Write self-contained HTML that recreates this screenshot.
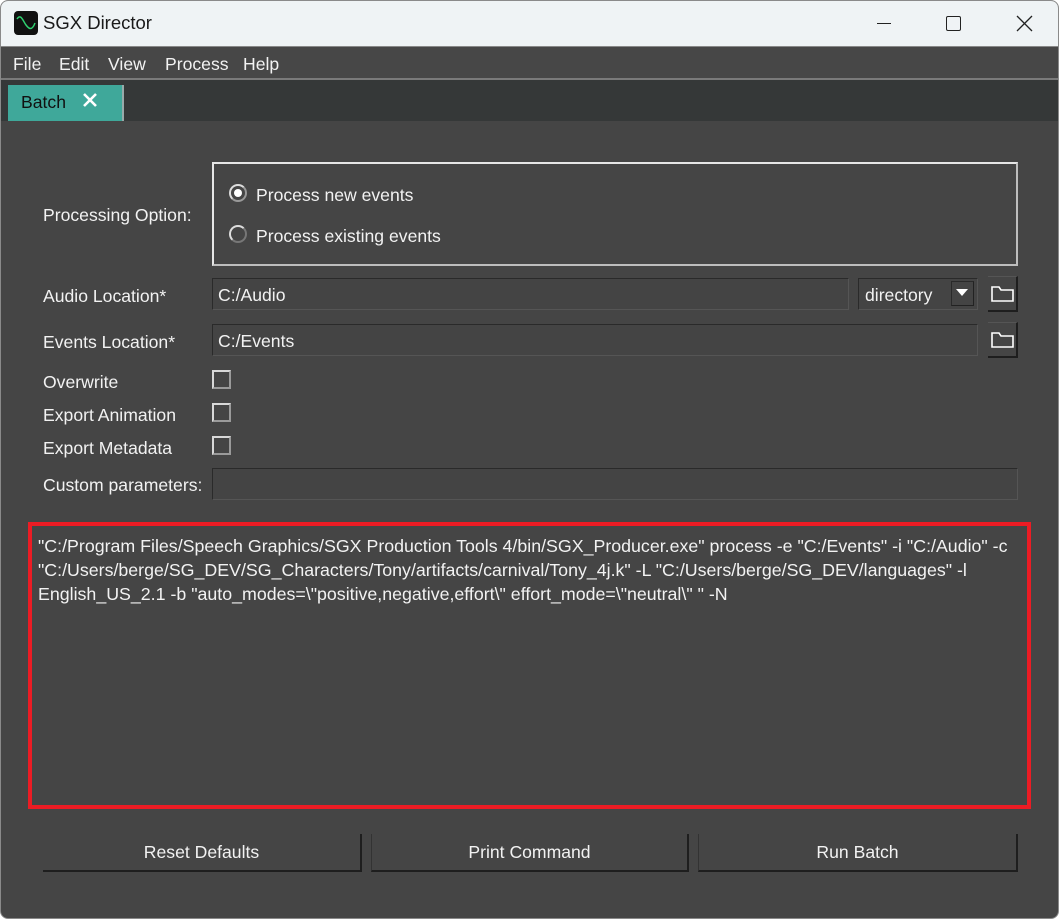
<!DOCTYPE html>
<html><head><meta charset="utf-8"><style>
*{margin:0;padding:0;box-sizing:border-box}
body{width:1059px;height:919px;background:#fff;font-family:"Liberation Sans",sans-serif;overflow:hidden;position:relative}
.a{position:absolute}
.win{left:0;top:0;width:1059px;height:919px;border:1px solid #8a8a8a;border-radius:8px;overflow:hidden;background:#454545}
.t{color:#f2f2f2;font-size:17.6px;white-space:nowrap}
.inp{background:#444;border:1px solid #2a2a2a;border-right-color:#555;border-bottom-color:#555}
.cb{width:19px;height:19px;border:2px solid #d8d8d8;border-right-color:#9a9a9a;border-bottom-color:#9a9a9a;background:#454545}
.btn{border-right:2px solid #1e1e1e;border-bottom:2px solid #1e1e1e;color:#f2f2f2;font-size:17.6px;text-align:center;line-height:36px}
.fold{width:30px;height:36px;border-right:2px solid #1e1e1e;border-bottom:2px solid #1e1e1e;border-top:1px solid #555}
</style></head><body>
<div class="a win">
 <div class="a" style="left:0;top:0;width:1059px;height:45px;background:#eff3f5"></div>
 <div class="a" style="left:13px;top:10px;width:24px;height:24px;background:#111;border-radius:4px">
  <svg width="24" height="24"><path d="M3 8 C7 2,9 10,12 14 S18 20,21 12" stroke="#2fd070" stroke-width="1.5" fill="none"/></svg></div>
 <div class="a" style="left:42px;top:11px;font-size:18.5px;color:#1a1a1a">SGX Director</div>
 <div class="a" style="left:876px;top:22px;width:14px;height:1px;background:#222"></div>
 <div class="a" style="left:945px;top:15px;width:15px;height:15px;border:1.5px solid #222;border-radius:2px"></div>
 <svg class="a" style="left:1015px;top:14px" width="17" height="17"><path d="M1 1L16 16M16 1L1 16" stroke="#222" stroke-width="1.3"/></svg>
 <div class="a" style="left:0;top:45px;width:1059px;height:34px;background:#474747;border-top:1px solid #888;border-bottom:2px solid #7a7a7a"></div>
 <div class="a t" style="left:12px;top:53px">File</div>
 <div class="a t" style="left:58px;top:53px">Edit</div>
 <div class="a t" style="left:107px;top:53px">View</div>
 <div class="a t" style="left:164px;top:53px">Process</div>
 <div class="a t" style="left:242px;top:53px">Help</div>
 <div class="a" style="left:0;top:79px;width:1059px;height:41px;background:#353838"></div>
 <div class="a" style="left:7px;top:84px;width:116px;height:36px;background:#3fa89a;border-right:2px solid #9aa"></div>
 <div class="a" style="left:20px;top:91px;font-size:17.6px;color:#111">Batch</div>
 <svg class="a" style="left:82px;top:92px" width="14" height="14"><path d="M1 1L13 13M13 1L1 13" stroke="#fff" stroke-width="2.6"/></svg>

 <div class="a t" style="left:42px;top:204px">Processing Option:</div>
 <div class="a" style="left:211px;top:161px;width:806px;height:104px;border:2px solid #e6e6e6;border-right-color:#bdbdbd;border-bottom-color:#bdbdbd"></div>
 <div class="a" style="left:228px;top:183px;width:18px;height:18px;border-radius:50%;border:2px solid #ddd;border-right-color:#999;border-bottom-color:#999"><div style="margin:3px;width:8px;height:8px;border-radius:50%;background:#fff"></div></div>
 <div class="a t" style="left:255px;top:184px">Process new events</div>
 <div class="a" style="left:228px;top:224px;width:18px;height:18px;border-radius:50%;border:2px solid #ddd;border-right-color:#777;border-bottom-color:#777"></div>
 <div class="a t" style="left:255px;top:225px">Process existing events</div>

 <div class="a t" style="left:42px;top:285px">Audio Location*</div>
 <div class="a inp" style="left:211px;top:277px;width:637px;height:32px"></div>
 <div class="a t" style="left:217px;top:284px">C:/Audio</div>
 <div class="a inp" style="left:857px;top:277px;width:120px;height:32px"></div>
 <div class="a t" style="left:864px;top:284px">directory</div>
 <div class="a" style="left:950px;top:280px;width:23px;height:25px;border:1px solid #2a2a2a;border-right-color:#222;border-bottom-color:#222"></div>
 <svg class="a" style="left:955px;top:288px" width="12" height="8"><path d="M0 0H12L6 7Z" fill="#fff"/></svg>
 <div class="a fold" style="left:987px;top:275px"></div>
 <svg class="a" style="left:990px;top:285px" width="24" height="17"><path d="M1 1H8L10 4H22V15H1Z" fill="none" stroke="#fff" stroke-width="1.6"/></svg>

 <div class="a t" style="left:42px;top:331px">Events Location*</div>
 <div class="a inp" style="left:211px;top:323px;width:766px;height:32px"></div>
 <div class="a t" style="left:217px;top:330px">C:/Events</div>
 <div class="a fold" style="left:987px;top:321px"></div>
 <svg class="a" style="left:990px;top:331px" width="24" height="17"><path d="M1 1H8L10 4H22V15H1Z" fill="none" stroke="#fff" stroke-width="1.6"/></svg>

 <div class="a t" style="left:42px;top:371px">Overwrite</div>
 <div class="a cb" style="left:211px;top:369px"></div>
 <div class="a t" style="left:42px;top:404px">Export Animation</div>
 <div class="a cb" style="left:211px;top:402px"></div>
 <div class="a t" style="left:42px;top:437px">Export Metadata</div>
 <div class="a cb" style="left:211px;top:435px"></div>
 <div class="a t" style="left:42px;top:474px">Custom parameters:</div>
 <div class="a inp" style="left:211px;top:467px;width:806px;height:32px"></div>

 <div class="a" style="left:27px;top:521px;width:1003px;height:287px;border:4px solid #ec1c24"></div>
 <div class="a" style="left:37px;top:533px;width:975px;color:#f2f2f2;font-size:17.8px;line-height:24px">"C:/Program Files/Speech Graphics/SGX Production Tools 4/bin/SGX_Producer.exe" process -e "C:/Events" -i "C:/Audio" -c "C:/Users/berge/SG_DEV/SG_Characters/Tony/artifacts/carnival/Tony_4j.k" -L "C:/Users/berge/SG_DEV/languages" -l English_US_2.1 -b "auto_modes=\"positive,negative,effort\" effort_mode=\"neutral\" " -N</div>

 <div class="a btn" style="left:42px;top:833px;width:319px;height:38px">Reset Defaults</div>
 <div class="a btn" style="left:370px;top:833px;width:318px;height:38px;border-left:1px solid #333">Print Command</div>
 <div class="a btn" style="left:697px;top:833px;width:320px;height:38px;border-left:1px solid #333">Run Batch</div>
</div>
</body></html>
